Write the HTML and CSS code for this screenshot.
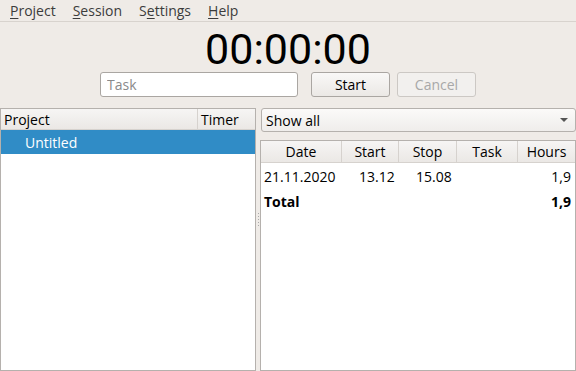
FILE: index.html
```html
<!DOCTYPE html>
<html lang="en">
<head>
    <meta charset="UTF-8">
    <title>Timer</title>
    <link rel="stylesheet" href="styles.css">
</head>
<body>
    <div class="menubar">
        <span class="menu"><u>P</u>roject</span>
        <span class="menu"><u>S</u>ession</span>
        <span class="menu">S<u>e</u>ttings</span>
        <span class="menu"><u>H</u>elp</span>
    </div>
    <div class="top">
        <div class="clock">00:00:00</div>
        <div class="controls">
            <input class="task" type="text" placeholder="Task">
            <button class="btn">Start</button>
            <button class="btn" disabled>Cancel</button>
        </div>
    </div>
    <div class="main">
        <div class="panel left">
            <div class="thead">
                <div class="th col-project">Project</div>
                <div class="th col-timer">Timer</div>
            </div>
            <div class="row selected">
                <div class="td col-project indent">Untitled</div>
                <div class="td col-timer"></div>
            </div>
        </div>
        <div class="splitter"><span class="grip"></span></div>
        <div class="right">
            <div class="combo">
                <span>Show all</span>
                <span class="arrow"></span>
            </div>
            <div class="panel sessions">
                <div class="thead">
                    <div class="th c-date">Date</div>
                    <div class="th c-start">Start</div>
                    <div class="th c-stop">Stop</div>
                    <div class="th c-task">Task</div>
                    <div class="th c-hours">Hours</div>
                </div>
                <div class="row first">
                    <div class="td c-date">21.11.2020</div>
                    <div class="td c-start">13.12</div>
                    <div class="td c-stop">15.08</div>
                    <div class="td c-task"></div>
                    <div class="td c-hours num">1,9</div>
                </div>
                <div class="row total">
                    <div class="td c-date">Total</div>
                    <div class="td c-start"></div>
                    <div class="td c-stop"></div>
                    <div class="td c-task"></div>
                    <div class="td c-hours num">1,9</div>
                </div>
            </div>
        </div>
    </div>
</body>
</html>
```
FILE: styles.css
```css
html, body {
    margin: 0;
    height: 100%;
}
body {
    background: #efebe7;
    font-family: "Open Sans", "DejaVu Sans", sans-serif;
    font-size: 14px;
    color: #000;
    display: flex;
    flex-direction: column;
    overflow: hidden;
}
.menubar {
    height: 21px;
    border-bottom: 1px solid #d8d3ce;
    display: flex;
    align-items: center;
    padding-left: 10px;
    gap: 17px;
    color: #3c3c3c;
}
.menu u {
    text-underline-offset: 2px;
}
.top {
    display: flex;
    flex-direction: column;
    align-items: center;
}
.clock {
    font-family: Roboto, "Open Sans", sans-serif;
    font-size: 43px;
    line-height: 50px;
    margin-top: 2px;
    margin-bottom: -2px;
}
.controls {
    display: flex;
    height: 25px;
}
.task {
    width: 198px;
    height: 25px;
    box-sizing: border-box;
    border: 1px solid #aaa6a2;
    border-radius: 3px;
    font: inherit;
    padding: 0 6px;
    margin-right: 13px;
}
.task::placeholder {
    color: #8a8a8a;
}
.btn {
    width: 79px;
    height: 25px;
    box-sizing: border-box;
    border: 1px solid #aaa6a2;
    border-radius: 3px;
    background: linear-gradient(#f9f8f7, #ebe8e5);
    font: inherit;
    color: #000;
    margin-right: 7px;
    padding: 0;
}
.btn:last-child {
    margin-right: 0;
}
.btn:disabled {
    color: #a8a8a8;
    border-color: #ccc8c4;
    background: #f2f0ee;
}
.main {
    flex: 1;
    display: flex;
    margin-top: 11px;
    min-height: 0;
}
.panel {
    background: #fff;
    border: 1px solid #b5b1ad;
    box-sizing: border-box;
}
.left {
    width: 256px;
}
.left .thead {
    height: 20px;
}
.splitter {
    width: 4px;
    display: flex;
    align-items: center;
    justify-content: center;
}
.grip {
    width: 1px;
    height: 14px;
    margin-top: -40px;
    background: repeating-linear-gradient(#aaa 0 1px, transparent 1px 3px);
}
.right {
    flex: 1;
    display: flex;
    flex-direction: column;
}
.combo {
    height: 24px;
    box-sizing: border-box;
    border: 1px solid #b5b1ad;
    border-radius: 3px;
    background: linear-gradient(#fbfaf9, #efedeb);
    display: flex;
    align-items: center;
    justify-content: space-between;
    padding: 0 7px 0 4px;
    margin-left: 1px;
}
.arrow {
    width: 0;
    height: 0;
    border-left: 4px solid transparent;
    border-right: 4px solid transparent;
    border-top: 4px solid #555;
}
.sessions {
    flex: 1;
    margin-top: 8px;
}
.thead {
    display: flex;
    height: 21px;
    background: linear-gradient(#f6f5f4, #ebe8e5);
    border-bottom: 1px solid #d6d2ce;
}
.th {
    box-sizing: border-box;
    border-right: 1px solid #d6d2ce;
    display: flex;
    align-items: center;
    padding: 0 3px;
}
.th:last-child {
    border-right: none;
}
.row {
    display: flex;
    height: 24px;
    align-items: center;
}
.selected {
    background: #308cc6;
    color: #fff;
}
.td {
    box-sizing: border-box;
    padding: 0 3px;
}
.indent {
    padding-left: 24px;
}
.col-project {
    width: 197px;
}
.col-timer {
    flex: 1;
}
.sessions .th {
    justify-content: center;
}
.sessions .row {
    height: 25px;
}
.sessions .first {
    margin-top: 1px;
}
.c-date { width: 81px; }
.c-start { width: 57px; }
.c-stop { width: 58px; }
.c-task { width: 61px; }
.c-hours { flex: 1; }
.row .c-start,
.row .c-stop {
    padding-left: 17px;
}
.num {
    text-align: right;
    padding-right: 4px;
}
.total {
    font-weight: bold;
}
```
